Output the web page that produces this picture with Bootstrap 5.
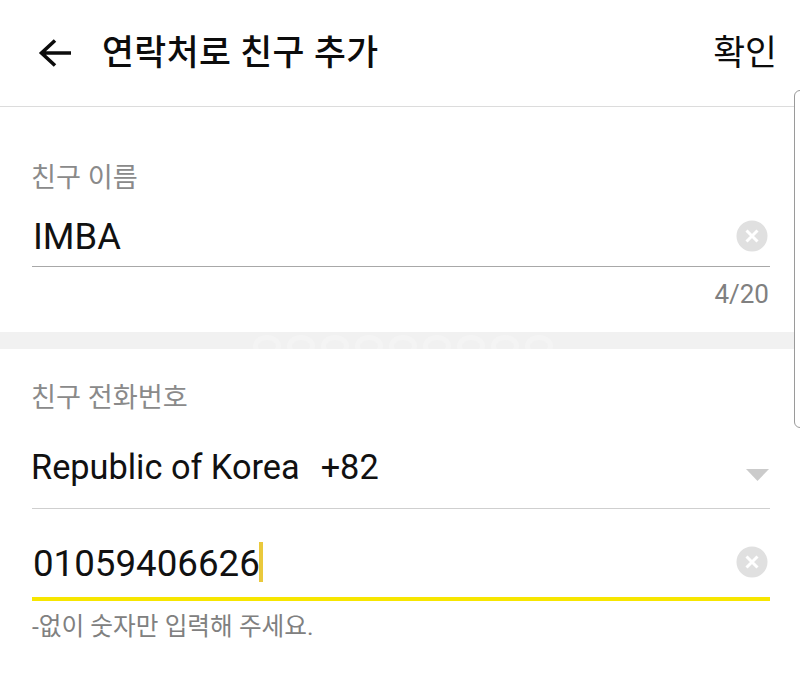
<!DOCTYPE html>
<html lang="ko">
<head>
<meta charset="utf-8">
<title>연락처로 친구 추가</title>
<link rel="stylesheet" href="https://cdn.jsdelivr.net/npm/bootstrap@5.3.0/dist/css/bootstrap.min.css">
<style>
html,body{height:100%;overflow:hidden}
body{font-family:Roboto,"Noto Sans CJK KR",sans-serif;color:#111;background:#fff;position:relative}
.top-bar{height:107px;border-bottom:1px solid #dcdcdc;padding:0 23px 0 38px}
.back-ico{width:34px;height:30px;margin-right:30px;flex:none}
.top-title{font-size:34.700px;font-weight:500;letter-spacing:.4px;line-height:1;margin:0;color:#0c0c0c}
.top-ok{font-size:34.700px;font-weight:400;line-height:1;color:#0c0c0c}
.form-zone{padding:0 30px 0 32px}
.zone-a{height:225px;padding-top:55px}
.field-label{font-size:27.200px;line-height:32px;color:#8a8a8a;margin:0 0 0 -1px}
.field-row{border-bottom:1px solid #a8a8a8;height:73px;padding:15px 0 0 1px}
.field-val{font-size:36.300px;line-height:1;color:#111}
.clear-ico{width:32px;height:32px;margin:0 2px 4px 0;flex:none}
.count-txt{font-size:26px;line-height:30px;color:#808080;margin-top:12px;padding-right:1px}
.band{height:17px;background:#f1f1f1;overflow:hidden;padding-left:253px;gap:6px}
.band-arc{width:28px;height:22px;margin-top:3px;border:5px solid #f4f4f4;border-radius:50%;flex:none}
.zone-b{padding-top:33px}
.country-row{height:95px;border-bottom:1px solid #cfcfcf;padding-top:12px}
.country-val{font-size:34.300px;line-height:1;white-space:nowrap;margin-left:-1px}
.country-code{margin-left:21px}
.caret-ico{width:23px;height:12px;flex:none;margin:16px 1px 0 0}
.phone-row{height:92px;border-bottom:4px solid #f7e600;padding:22px 0 0 1px}
.phone-val{font-size:36.700px;line-height:1;color:#111}
.caret-bar{display:inline-block;width:4px;height:40px;background:#eac93c;flex:none;margin:0 0 4px -1px}
.hint-txt{font-size:24.700px;line-height:30px;color:#808080;margin-top:11px}
.edge-tab{position:absolute;left:794px;top:90px;width:12px;height:338px;border:1px solid #9a9a9a;border-radius:8px;background:#fff}
</style>
</head>
<body>
<header class="top-bar d-flex align-items-center">
  <svg class="back-ico" viewBox="0 0 34 30" aria-hidden="true"><path d="M33 15H4M17 2.500 3.500 15 17 27.500" fill="none" stroke="#0c0c0c" stroke-width="3.600"/></svg>
  <h1 class="top-title">연락처로 친구 추가</h1>
  <span class="top-ok ms-auto">확인</span>
</header>
<section class="form-zone zone-a">
  <p class="field-label">친구 이름</p>
  <div class="field-row d-flex align-items-center justify-content-between">
    <span class="field-val">IMBA</span>
    <svg class="clear-ico" viewBox="0 0 32 32" aria-hidden="true"><circle cx="16" cy="16" r="15.500" fill="#e0e0e0"/><path d="M10.500 10.500l11 11M21.500 10.500l-11 11" stroke="#fff" stroke-width="3"/></svg>
  </div>
  <div class="count-txt text-end">4/20</div>
</section>
<div class="band d-flex">
  <i class="band-arc"></i><i class="band-arc"></i><i class="band-arc"></i><i class="band-arc"></i><i class="band-arc"></i><i class="band-arc"></i><i class="band-arc"></i><i class="band-arc"></i><i class="band-arc"></i>
</div>
<section class="form-zone zone-b">
  <p class="field-label">친구 전화번호</p>
  <div class="country-row d-flex align-items-center justify-content-between">
    <span class="country-val">Republic of Korea<span class="country-code">+82</span></span>
    <svg class="caret-ico" viewBox="0 0 23 12" aria-hidden="true"><path d="M0 0H23L11.500 12Z" fill="#cbcbcb"/></svg>
  </div>
  <div class="phone-row d-flex align-items-center">
    <span class="phone-val">01059406626</span><span class="caret-bar"></span>
    <svg class="clear-ico ms-auto" viewBox="0 0 32 32" aria-hidden="true"><circle cx="16" cy="16" r="15.500" fill="#e0e0e0"/><path d="M10.500 10.500l11 11M21.500 10.500l-11 11" stroke="#fff" stroke-width="3"/></svg>
  </div>
  <div class="hint-txt">-없이 숫자만 입력해 주세요.</div>
</section>
<div class="edge-tab"></div>
<script src="https://cdn.jsdelivr.net/npm/bootstrap@5.3.0/dist/js/bootstrap.bundle.min.js"></script>
</body>
</html>
